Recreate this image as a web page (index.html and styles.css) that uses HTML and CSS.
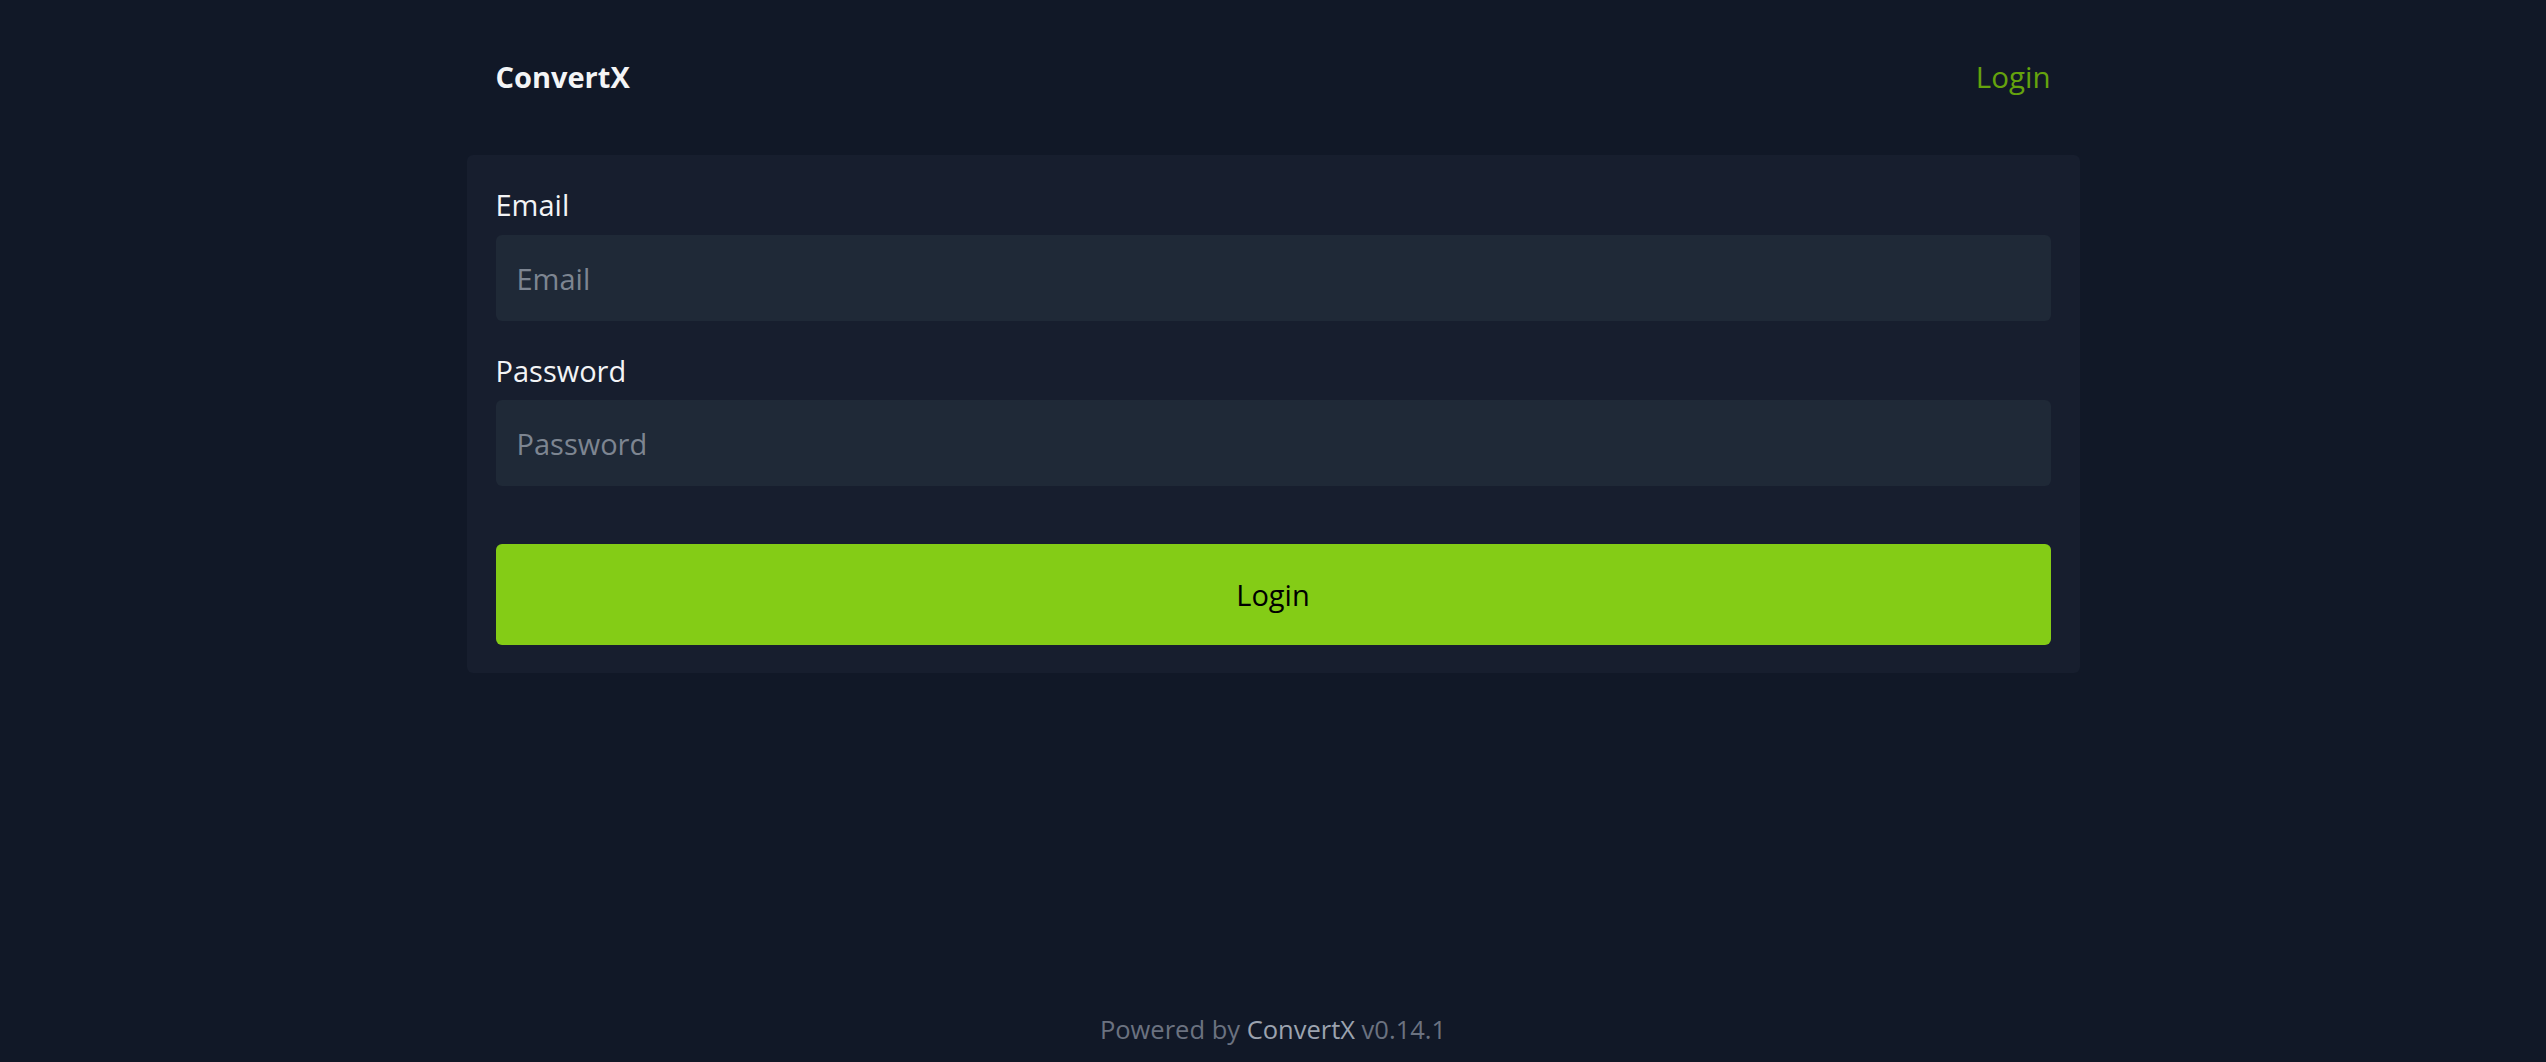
FILE: index.html
```html
<!DOCTYPE html>
<html lang="en">
<head>
<meta charset="utf-8">
<title>ConvertX | Login</title>
<link rel="stylesheet" href="styles.css">
</head>
<body>
  <div class="page">
    <header class="header">
      <a class="brand" href="#">ConvertX</a>
      <a class="nav-login" href="#">Login</a>
    </header>
    <main class="main">
      <form class="card">
        <label class="label" for="email">Email</label>
        <input class="input" id="email" type="email" placeholder="Email">
        <label class="label label-gap" for="password">Password</label>
        <input class="input" id="password" type="password" placeholder="Password">
        <button class="btn" type="button">Login</button>
      </form>
    </main>
    <footer class="footer">
      <span>Powered by <a class="footer-link" href="#">ConvertX</a> v0.14.1</span>
    </footer>
  </div>
</body>
</html>
```

FILE: styles.css
```css
* {
  box-sizing: border-box;
}

html, body {
  margin: 0;
  padding: 0;
  background: #111827;
}

body {
  font-family: "Open Sans", "Noto Sans", sans-serif;
  color: #f3f4f6;
}

.page {
  min-height: 100vh;
  display: flex;
  flex-direction: column;
}

.header {
  width: 1613px;
  margin: 0 auto;
  height: 152px;
  padding: 0 29px;
  display: flex;
  align-items: center;
  justify-content: space-between;
}

.brand {
  font-size: 29px;
  font-weight: 700;
  color: #f3f4f6;
  text-decoration: none;
}

.nav-login {
  font-size: 29.5px;
  color: #65a30d;
  text-decoration: none;
}

.main {
  width: 1613px;
  margin: 3px auto 0;
}

.card {
  display: flex;
  flex-direction: column;
  background: #171e2e;
  border-radius: 6px;
  padding: 28px 29px 28px;
}

.label {
  font-size: 29px;
  line-height: 44px;
  color: #f3f4f6;
}

.label-gap {
  margin-top: 28px;
}

.input {
  margin-top: 8px;
  height: 86px;
  width: 100%;
  border: none;
  outline: none;
  border-radius: 6px;
  background: #1f2937;
  padding: 0 21px;
  font-family: "Open Sans", "Noto Sans", sans-serif;
  font-size: 29px;
  color: #f3f4f6;
}

.label-gap + .input {
  margin-top: 7px;
}

.input::placeholder {
  color: #7d8591;
  opacity: 1;
}

.btn {
  margin-top: 58px;
  height: 101px;
  width: 100%;
  border: none;
  border-radius: 6px;
  background: #84cc16;
  color: #000;
  font-family: "Open Sans", "Noto Sans", sans-serif;
  font-size: 29px;
  cursor: pointer;
}

.footer {
  margin-top: auto;
  text-align: center;
  font-size: 25.5px;
  line-height: 36px;
  color: #6b7280;
  padding-bottom: 15px;
}

.footer-link {
  color: #9ca3af;
  text-decoration: none;
}
```
